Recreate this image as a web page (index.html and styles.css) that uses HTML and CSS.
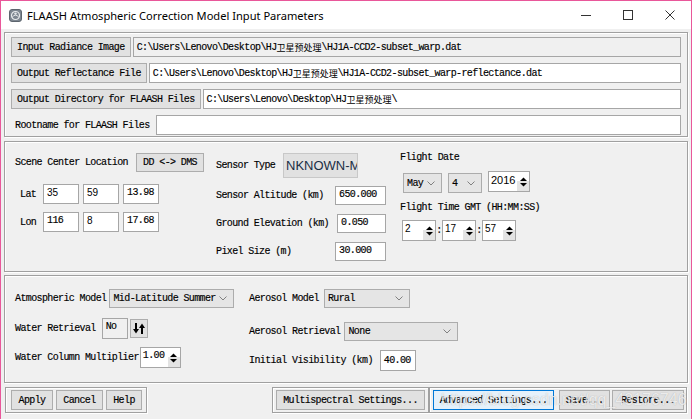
FILE: index.html
```html
<!DOCTYPE html>
<html>
<head>
<meta charset="utf-8">
<title>FLAASH</title>
<link rel="stylesheet" href="styles.css">
</head>
<body>
<div class="window">
  <div class="titlebar">
    <svg class="app-icon" viewBox="0 0 13 13" width="13" height="13">
      <rect x="0.5" y="0.5" width="12" height="12" rx="2.5" fill="#7d8690" stroke="#5d656e"/>
      <circle cx="6.5" cy="6.5" r="4" fill="none" stroke="#e8eaec" stroke-width="1.2"/>
      <path d="M3.2 8.2 Q6.5 4 9.8 8.2" fill="none" stroke="#e8eaec" stroke-width="1"/>
      <circle cx="6.5" cy="4.6" r="1.2" fill="#e8eaec"/>
    </svg>
    <span class="title">FLAASH Atmospheric Correction Model Input Parameters</span>
    <div class="controls">
      <div class="ctrl"><svg width="10" height="10" viewBox="0 0 10 10"><line x1="0" y1="5.5" x2="10" y2="5.5" stroke="#333" stroke-width="1"/></svg></div>
      <div class="ctrl"><svg width="10" height="10" viewBox="0 0 10 10"><rect x="0.5" y="0.5" width="9" height="9" fill="none" stroke="#333" stroke-width="1"/></svg></div>
      <div class="ctrl"><svg width="10" height="10" viewBox="0 0 10 10"><path d="M0.5 0.5 L9.5 9.5 M9.5 0.5 L0.5 9.5" stroke="#333" stroke-width="1"/></svg></div>
    </div>
  </div>

  <div class="client">
    <div class="panel files">
      <div class="frow">
        <div class="btn">Input Radiance Image</div>
        <div class="field ro grow">C:\Users\Lenovo\Desktop\HJ<span class="cjk">卫星预处理</span>\HJ1A-CCD2-subset_warp.dat</div>
      </div>
      <div class="frow">
        <div class="btn">Output Reflectance File</div>
        <div class="field grow">C:\Users\Lenovo\Desktop\HJ<span class="cjk">卫星预处理</span>\HJ1A-CCD2-subset_warp-reflectance.dat</div>
      </div>
      <div class="frow">
        <div class="btn">Output Directory for FLAASH Files</div>
        <div class="field grow">C:\Users\Lenovo\Desktop\HJ<span class="cjk">卫星预处理</span>\</div>
      </div>
      <div class="frow">
        <span class="lbl root">Rootname for FLAASH Files</span>
        <div class="field grow"></div>
      </div>
    </div>

    <div class="panel scene">
      <div class="col c-loc">
        <div class="loc-row">
          <span class="lbl">Scene Center Location</span>
          <div class="btn dms">DD &lt;-&gt; DMS</div>
        </div>
        <div class="coord-row lat">
          <span class="lbl clbl">Lat</span>
          <div class="field cin sans">35</div>
          <div class="field cin sans">59</div>
          <div class="field cin">13.98</div>
        </div>
        <div class="coord-row lon">
          <span class="lbl clbl">Lon</span>
          <div class="field cin">116</div>
          <div class="field cin sans">8</div>
          <div class="field cin">17.68</div>
        </div>
      </div>

      <div class="col c-sensor">
        <div class="st-row">
          <span class="lbl st-lbl">Sensor Type</span>
          <div class="st-box">NKNOWN-MSI</div>
        </div>
        <div class="s-row first">
          <span class="lbl w119">Sensor Altitude (km)</span>
          <div class="field sin">650.000</div>
        </div>
        <div class="s-row">
          <span class="lbl w121">Ground Elevation (km)</span>
          <div class="field sin n49">0.050</div>
        </div>
        <div class="s-row">
          <span class="lbl w119">Pixel Size (m)</span>
          <div class="field sin">30.000</div>
        </div>
      </div>

      <div class="col c-flight">
        <div class="f-lbl">Flight Date</div>
        <div class="date-row">
          <div class="combo w39"><span>May</span><svg class="chev" width="8" height="5" viewBox="0 0 8 5"><polyline points="0.5,0.5 4,4 7.5,0.5" fill="none" stroke="#808080"/></svg></div>
          <div class="combo w34"><span>4</span><svg class="chev" width="8" height="5" viewBox="0 0 8 5"><polyline points="0.5,0.5 4,4 7.5,0.5" fill="none" stroke="#808080"/></svg></div>
          <div class="spin w42 year"><span class="sv sans big">2016</span><span class="sa"><svg width="9" height="12" viewBox="0 0 9 12"><polygon points="1,5 4.5,1.5 8,5" fill="#000"/><polygon points="1,7 8,7 4.5,10.5" fill="#000"/></svg></span></div>
        </div>
        <div class="f-lbl t-lbl">Flight Time GMT (HH:MM:SS)</div>
        <div class="time-row">
          <div class="spin w34"><span class="sv sans">2</span><span class="sa"><svg width="9" height="12" viewBox="0 0 9 12"><polygon points="1,5 4.5,1.5 8,5" fill="#000"/><polygon points="1,7 8,7 4.5,10.5" fill="#000"/></svg></span></div>
          <span class="colon">:</span>
          <div class="spin w34"><span class="sv sans">17</span><span class="sa"><svg width="9" height="12" viewBox="0 0 9 12"><polygon points="1,5 4.5,1.5 8,5" fill="#000"/><polygon points="1,7 8,7 4.5,10.5" fill="#000"/></svg></span></div>
          <span class="colon">:</span>
          <div class="spin w34"><span class="sv sans">57</span><span class="sa"><svg width="9" height="12" viewBox="0 0 9 12"><polygon points="1,5 4.5,1.5 8,5" fill="#000"/><polygon points="1,7 8,7 4.5,10.5" fill="#000"/></svg></span></div>
        </div>
      </div>
    </div>

    <div class="panel atmos">
      <div class="col a-left">
        <div class="a-row r1">
          <span class="lbl">Atmospheric Model</span>
          <div class="combo am"><span>Mid-Latitude Summer</span><svg class="chev" width="8" height="5" viewBox="0 0 8 5"><polyline points="0.5,0.5 4,4 7.5,0.5" fill="none" stroke="#808080"/></svg></div>
        </div>
        <div class="a-row r2">
          <span class="lbl">Water Retrieval</span>
          <div class="field no">No</div>
          <div class="btn tog"><svg width="12" height="11" viewBox="0 0 12 11"><path d="M3 0 V7" stroke="#000" stroke-width="2"/><polygon points="0,6 6,6 3,10.5" fill="#000"/><path d="M9 11 V4" stroke="#000" stroke-width="2"/><polygon points="6,5 12,5 9,0.5" fill="#000"/></svg></div>
        </div>
        <div class="a-row r3">
          <span class="lbl">Water Column Multiplier</span>
          <div class="spin wcm"><span class="sv">1.00</span><span class="sa"><svg width="9" height="12" viewBox="0 0 9 12"><polygon points="1,5 4.5,1.5 8,5" fill="#000"/><polygon points="1,7 8,7 4.5,10.5" fill="#000"/></svg></span></div>
        </div>
      </div>
      <div class="col a-right">
        <div class="a-row r1">
          <span class="lbl">Aerosol Model</span>
          <div class="combo aer"><span>Rural</span><svg class="chev" width="8" height="5" viewBox="0 0 8 5"><polyline points="0.5,0.5 4,4 7.5,0.5" fill="none" stroke="#808080"/></svg></div>
        </div>
        <div class="a-row r2b">
          <span class="lbl">Aerosol Retrieval</span>
          <div class="combo aret"><span>None</span><svg class="chev" width="8" height="5" viewBox="0 0 8 5"><polyline points="0.5,0.5 4,4 7.5,0.5" fill="none" stroke="#808080"/></svg></div>
        </div>
        <div class="a-row r3b">
          <span class="lbl">Initial Visibility (km)</span>
          <div class="field vis">40.00</div>
        </div>
      </div>
    </div>

    <div class="footer">
      <div class="group g-main">
        <div class="btn fb apply">Apply</div>
        <div class="btn fb cancel">Cancel</div>
        <div class="btn fb help">Help</div>
      </div>
      <div class="group g-multi">
        <div class="btn fb multi">Multispectral Settings...</div>
      </div>
      <div class="group g-adv">
        <div class="btn fb adv">Advanced Settings...</div>
        <div class="btn fb save">Save...</div>
        <div class="btn fb restore">Restore...</div>
      </div>
    </div>
  </div>
  <div class="watermark">https://blog.csdn.net/qq_43176746</div>
</div>
</body>
</html>
```

FILE: styles.css
```css
* { box-sizing: border-box; }
html, body { margin: 0; padding: 0; }
body { width: 692px; height: 419px; overflow: hidden; background: #f0f0f0; }

.window {
  position: relative;
  width: 692px;
  height: 419px;
  border: 1px solid #e9579a;
  border-bottom: none;
  background: #f0f0f0;
  display: flex;
  flex-direction: column;
  font-family: "Liberation Mono", "Noto Sans CJK SC", monospace;
  font-size: 10px;
  letter-spacing: -0.62px;
  color: #000;
  -webkit-text-stroke: 0.15px #000;
}

/* title bar */
.titlebar {
  flex: none;
  height: 28px;
  background: #fff;
  display: flex;
  align-items: center;
  font-family: "Noto Sans", "Open Sans", sans-serif;
  font-size: 11.1px;
  letter-spacing: 0;
  -webkit-text-stroke: 0;
  color: #000;
}
.app-icon { margin-left: 8px; flex: none; }
.title { margin-left: 5px; white-space: nowrap; }
.controls { margin-left: auto; display: flex; }
.ctrl { width: 42px; height: 28px; display: flex; align-items: center; justify-content: center; }

.client { flex: 1; display: flex; flex-direction: column; }

/* generic widgets */
.lbl { white-space: nowrap; flex: none; }
.cjk { font-size: 9px; letter-spacing: 0; -webkit-text-stroke: 0; }
.sans { font-family: "Liberation Sans", "Noto Sans", sans-serif; font-size: 10px; letter-spacing: 0; -webkit-text-stroke: 0; }
.sans.big { font-size: 11px; }

.btn {
  flex: none;
  display: flex;
  align-items: center;
  justify-content: center;
  background: #e1e1e1;
  border: 1px solid #adadad;
  white-space: nowrap;
  padding: 0 5px;
}

.field {
  flex: none;
  display: flex;
  align-items: center;
  background: #fff;
  border: 1px solid #a6a6a6;
  padding-left: 3px;
  white-space: nowrap;
  overflow: hidden;
}
.field.ro { background: #f0f0f0; }
.grow { flex: 1; }

.panel {
  flex: none;
  margin-left: 3px;
  margin-right: 3px;
  border: 1px solid #a0a0a0;
  box-shadow: inset 1px 1px 0 #fff, 1px 1px 0 #fff;
}

/* files panel */
.files {
  margin-top: 3px;
  padding: 4px 6px 1px 6px;
  display: flex;
  flex-direction: column;
  gap: 6px;
}
.frow { height: 20px; display: flex; gap: 2px; }
.root { align-self: center; padding-left: 4px; margin-right: 4px; }

/* scene panel */
.scene {
  margin-top: 4px;
  height: 131px;
  display: flex;
  padding-left: 10px;
}
.col { display: flex; flex-direction: column; flex: none; }
.c-loc { width: 201px; padding-top: 11px; }
.loc-row { height: 19px; display: flex; align-items: center; }
.dms { margin-left: 8px; width: 68px; height: 19px; }
.coord-row { height: 20px; display: flex; align-items: stretch; padding-left: 5px; gap: 4px; }
.coord-row.lat { margin-top: 12px; }
.coord-row.lon { margin-top: 8px; }
.clbl { width: 19px; align-self: center; }
.cin { width: 36px; align-items: flex-start; padding-top: 2px; }

.c-sensor { width: 184px; padding-top: 11px; }
.st-row { height: 25px; display: flex; align-items: center; }
.st-lbl { width: 67px; }
.st-box {
  width: 75px;
  height: 25px;
  background: #e1e1e1;
  border: 1px solid #c8c8c8;
  font-family: "Liberation Sans", "Noto Sans", sans-serif;
  font-size: 13px;
  letter-spacing: 0;
  -webkit-text-stroke: 0;
  color: #1a2e45;
  display: flex;
  align-items: center;
  overflow: hidden;
  white-space: nowrap;
  padding-left: 2px;
}
.s-row { height: 19px; display: flex; align-items: center; margin-top: 9px; }
.s-row.first { margin-top: 8px; }
.w119 { width: 119px; }
.w121 { width: 121px; }
.sin { width: 51px; height: 19px; align-items: flex-start; padding-top: 2px; }
.sin.n49 { width: 49px; }

.c-flight { flex: 1; padding-top: 10px; }
.f-lbl { height: 12px; line-height: 12px; white-space: nowrap; }
.date-row { margin-top: 9px; height: 20px; display: flex; align-items: center; padding-left: 3px; gap: 6px; }
.t-lbl { margin-top: 9px; }
.time-row { margin-top: 6px; height: 21px; display: flex; align-items: center; padding-left: 2px; }
.colon { width: 6px; text-align: center; }

.combo {
  flex: none;
  height: 20px;
  display: flex;
  align-items: center;
  justify-content: space-between;
  background: #e5e5e5;
  border: 1px solid #acacac;
  padding: 0 6px 0 3px;
  white-space: nowrap;
}
.chev { -webkit-text-stroke: 0; }
.w39 { width: 39px; }
.w34 { width: 34px; }
.w42 { width: 42px; }

.spin {
  flex: none;
  height: 21px;
  display: flex;
  align-items: stretch;
  background: #fff;
  border: 1px solid #a6a6a6;
}
.spin.year { height: 21px; margin-top: -3px; }
.sv { flex: 1; padding-left: 2px; padding-top: 2px; white-space: nowrap; overflow: hidden; }
.sa {
  width: 12px;
  flex: none;
  display: flex;
  align-items: center;
  justify-content: center;
  background: linear-gradient(#ffffff 45%, #e3e3e3 45%);
}

/* atmosphere panel */
.atmos {
  margin-top: 3px;
  height: 108px;
  display: flex;
  padding-left: 10px;
  padding-top: 13px;
}
.a-left { width: 234px; }
.a-right { flex: 1; }
.a-row { display: flex; align-items: center; }
.a-row.r1 { height: 19px; }
.a-row.r2 { height: 21px; margin-top: 10px; }
.a-row.r3 { height: 21px; margin-top: 8px; }
.a-row.r2b { height: 19px; margin-top: 14px; }
.a-row.r3b { height: 21px; margin-top: 9px; }

.combo.am { width: 125px; height: 19px; margin-left: 3px; }
.combo.aer { width: 86px; height: 19px; margin-left: 5px; }
.combo.aret { width: 114px; height: 19px; margin-left: 4px; }
.no { width: 26px; height: 21px; margin-left: 6px; align-items: flex-start; padding-top: 2px; background: #f0f0f0; }
.tog { width: 18px; height: 19px; margin-left: 2px; padding: 0; }
.wcm { width: 41px; margin-left: 1px; }
.vis { width: 36px; height: 21px; margin-left: 7px; }

/* footer */
.footer { margin-top: 4px; display: flex; }
.group {
  flex: none;
  height: 26px;
  display: flex;
  align-items: center;
  border: 1px solid #a0a0a0;
  box-shadow: inset 1px 1px 0 #fff, 1px 1px 0 #fff;
}
.g-main { margin-left: 4px; padding: 0 4px 0 5px; gap: 3px; }
.g-multi { margin-left: auto; padding: 0 3px; }
.g-adv { margin-right: 4px; padding: 0 2px 0 3px; }
.fb { height: 20px; padding: 0; }
.apply { width: 42px; }
.cancel { width: 47px; }
.help { width: 36px; }
.multi { width: 149px; }
.adv { width: 121px; background: #e5f1fb; border-color: #0078d7; }
.save { width: 51px; margin-left: 5px; }
.restore { width: 72px; margin-left: 2px; }

.watermark {
  position: absolute;
  left: 440px;
  top: 390px;
  font-family: "Liberation Sans", "Noto Sans", sans-serif;
  font-size: 16px;
  letter-spacing: 0;
  -webkit-text-stroke: 0;
  color: rgba(255, 255, 255, 0.75);
  text-shadow: 0 0 1px rgba(110, 110, 110, 0.5);
  white-space: nowrap;
  pointer-events: none;
}
```
